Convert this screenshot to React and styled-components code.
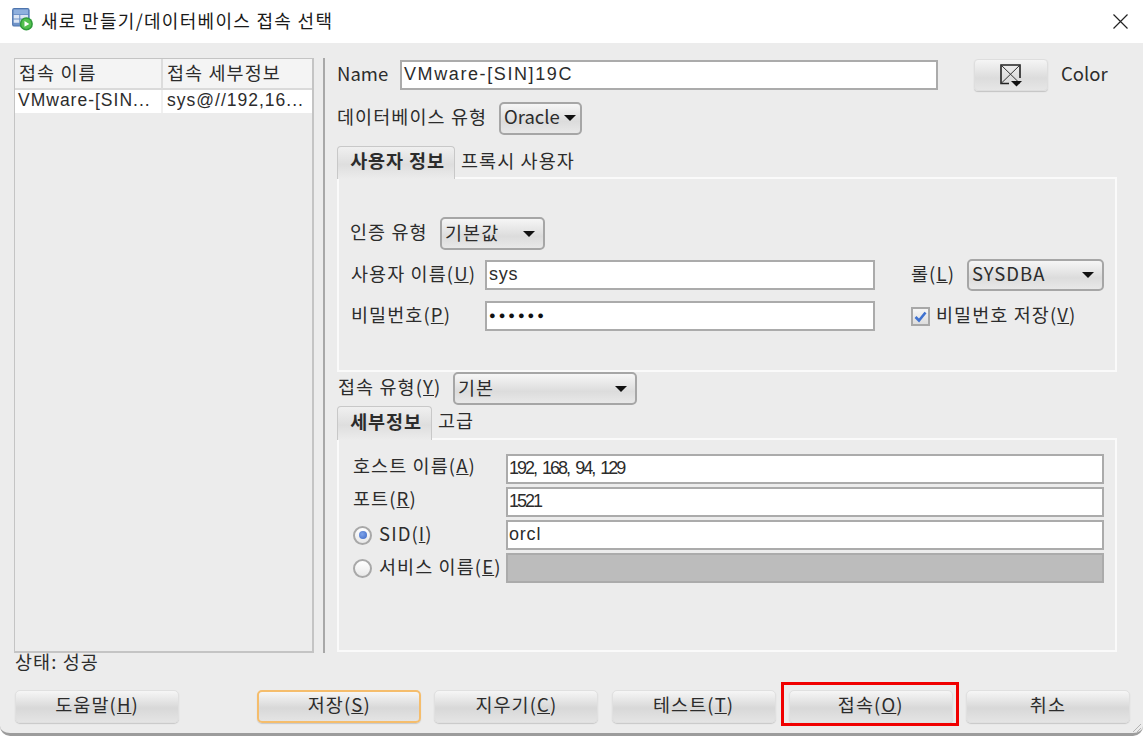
import React from "react"
import styled, { createGlobalStyle, css } from "styled-components"

const KR = `"Noto Sans CJK KR", "Liberation Sans", sans-serif`
const LATIN = `"Liberation Sans", "Noto Sans CJK KR", sans-serif`

const GlobalStyle = createGlobalStyle`
  html, body {
    margin: 0;
    padding: 0;
    background: #ffffff;
    overflow: hidden;
  }
  * {
    box-sizing: border-box;
  }
`

const Window = styled.div`
  display: flex;
  flex-direction: column;
  width: 1143px;
  height: 736px;
  font-family: ${KR};
  font-size: 18.5px;
  letter-spacing: 1.1px;
  color: #2c2c2c;
`

const TitleBar = styled.div`
  display: flex;
  align-items: center;
  height: 43px;
  padding: 0 15px 0 11px;
  background: #ffffff;
  flex-shrink: 0;
`

const TitleIcon = styled.div`
  display: flex;
  padding-bottom: 5px;
`

const TitleText = styled.div`
  margin-left: 7px;
  padding-bottom: 4px;
  font-size: 18px;
  letter-spacing: 1.3px;
  color: #1a1a1a;
`

const CloseButton = styled.div`
  display: flex;
  margin-left: auto;
`

const Body = styled.div`
  position: relative;
  flex: 1;
  display: flex;
  flex-direction: column;
  padding: 15px 14px 0;
  background: #ececec;
  border-bottom: 3px solid #9c9c9c;
  border-radius: 0 0 10px 10px;
`

const Main = styled.div`
  display: flex;
  height: 595px;
`

const ListPanel = styled.div`
  display: flex;
  flex-direction: column;
  width: 300px;
  border: 1px solid #c4c4c4;
  border-width: 1px 2px 2px 1px;
`

const ListHeader = styled.div`
  display: grid;
  grid-template-columns: 148px 1fr;
  height: 31px;
  background: #f4f4f4;
  border-bottom: 2px solid #dadada;
`

const HeaderCell = styled.div`
  display: flex;
  align-items: center;
  padding: 0 0 4px 4px;
  white-space: nowrap;
  border-right: ${(p) => (p.$last ? "none" : "2px solid #dcdcdc")};
`

const ListRow = styled.div`
  display: grid;
  grid-template-columns: 148px 1fr;
  height: 23px;
  background: #ffffff;
`

const RowCell = styled.div`
  display: flex;
  align-items: center;
  padding: 0 0 2px ${(p) => (p.$first ? "3px" : "4px")};
  font-family: ${LATIN};
  font-size: 17.5px;
  letter-spacing: 1px;
  white-space: nowrap;
  overflow: hidden;
  border-right: ${(p) => (p.$first ? "2px solid #f0f0f0" : "none")};
`

const Divider = styled.div`
  width: 2px;
  margin-left: 9px;
  background: #a8a8a8;
`

const RightPane = styled.div`
  display: flex;
  flex-direction: column;
  width: 780px;
  margin-left: 12px;
`

const Row = styled.div`
  display: flex;
  align-items: center;
  height: ${(p) => p.$h || 32}px;
  margin-top: ${(p) => p.$mt || 0}px;
`

const Label = styled.div`
  width: ${(p) => (p.$w ? `${p.$w}px` : "auto")};
  margin-left: ${(p) => p.$ml || 0}px;
  padding-bottom: 5px;
  letter-spacing: ${(p) => (p.$ls !== undefined ? p.$ls : 1.1)}px;
  white-space: nowrap;
  flex-shrink: 0;
`

const Field = styled.div`
  display: flex;
  align-items: center;
  width: ${(p) => (p.$w ? `${p.$w}px` : "auto")};
  height: ${(p) => p.$h || 30}px;
  padding: 0 0 2px ${(p) => (p.$tight ? 1 : 2)}px;
  background: ${(p) => (p.$disabled ? "#bcbcbc" : "#ffffff")};
  border: 2px solid #ababab;
  font-family: ${LATIN};
  font-size: 18px;
  letter-spacing: ${(p) => (p.$ls !== undefined ? p.$ls : 0.8)}px;
  white-space: nowrap;
`

const Comma = styled.span`
  margin-right: 6px;
`

const Dots = styled.span`
  font-size: 11px;
  letter-spacing: 3px;
  color: #111111;
`

const Dropdown = styled.div`
  display: flex;
  align-items: center;
  justify-content: space-between;
  width: ${(p) => p.$w}px;
  height: ${(p) => p.$h || 33}px;
  margin-left: ${(p) => p.$ml || 0}px;
  padding: 0 8px 0 3px;
  background: linear-gradient(#f6f6f6, #dcdcdc 60%, #e8e8e8);
  border: 2px solid #a6a6a6;
  border-radius: 5px;
  letter-spacing: ${(p) => (p.$ls !== undefined ? p.$ls : 1.1)}px;
  white-space: nowrap;
  flex-shrink: 0;
`

const DropdownText = styled.span`
  padding-bottom: 4px;
`

const Caret = styled.span`
  width: 0;
  height: 0;
  margin-left: 4px;
  border-left: 6px solid transparent;
  border-right: 6px solid transparent;
  border-top: 6px solid #111111;
`

const ColorButton = styled.div`
  display: flex;
  align-items: center;
  justify-content: center;
  width: 74px;
  height: 32px;
  margin-left: 36px;
  background: linear-gradient(#f5f5f5, #dcdcdc 60%, #e6e6e6);
  border: 1px solid #dedede;
  border-radius: 4px;
  box-shadow: 0 1px 1px #c4c4c4;
`

const ColorLabel = styled.div`
  margin-left: 13px;
  padding-bottom: 5px;
  letter-spacing: 0;
`

const TabStrip = styled.div`
  display: flex;
  align-items: flex-end;
  height: ${(p) => p.$h}px;
  margin-top: ${(p) => p.$mt || 0}px;
`

const Tab = styled.div`
  display: flex;
  align-items: center;
  justify-content: center;
  width: ${(p) => p.$w}px;
  height: 100%;
  white-space: nowrap;
  ${(p) =>
    p.$active
      ? css`
          position: relative;
          z-index: 1;
          margin-bottom: -2px;
          height: calc(100% + 2px);
          padding: 0 0 6px 3px;
          font-weight: 700;
          letter-spacing: 0.9px;
          background: linear-gradient(#f0f0f0, #dedede 55%, #ececec);
          border: 1px solid #c8c8c8;
          border-bottom: none;
          border-radius: 4px 4px 0 0;
        `
      : css`
          margin-left: 6px;
          justify-content: flex-start;
          padding-bottom: 4px;
        `}
`

const Panel = styled.div`
  display: flex;
  flex-direction: column;
  height: ${(p) => p.$h}px;
  padding-top: ${(p) => p.$pt}px;
  background: #ececec;
  border: 2px solid #fafafa;
`

const FieldGrid = styled.div`
  display: grid;
  grid-template-columns: 167px 598px;
  grid-auto-rows: 30px;
  row-gap: 3px;
`

const FieldLabel = styled.div`
  display: flex;
  align-items: center;
  padding-left: 14px;
  padding-bottom: ${(p) => p.$pb || 4}px;
  white-space: nowrap;
`

const Radio = styled.span`
  display: flex;
  align-items: center;
  justify-content: center;
  width: 19px;
  height: 19px;
  margin: 4px 7px 0 0;
  background: linear-gradient(#ffffff, #e8e8e8);
  border: 2px solid #a8a8a8;
  border-radius: 50%;
  flex-shrink: 0;
  &::after {
    content: "";
    display: ${(p) => (p.$on ? "block" : "none")};
    width: 8px;
    height: 8px;
    border-radius: 50%;
    background: radial-gradient(circle at 40% 40%, #7fa4ea, #3a66c4);
  }
`

const Check = styled.span`
  display: flex;
  align-items: center;
  justify-content: center;
  width: 19px;
  height: 19px;
  margin: 0 6px 0 36px;
  background: linear-gradient(#f6f6f6, #dddddd);
  border: 2px solid #a8a8a8;
  flex-shrink: 0;
`

const Status = styled.div`
  height: 37px;
  padding: 0 0 0 1px;
  line-height: 17px;
  white-space: nowrap;
`

const ButtonBar = styled.div`
  display: flex;
  padding-left: 1px;
  gap: 13.2px;
`

const Button = styled.div`
  position: relative;
  display: flex;
  align-items: center;
  justify-content: center;
  width: 164px;
  height: 33px;
  flex-shrink: 0;
  margin-left: ${(p) => p.$ml || 0}px;
  padding-bottom: 5px;
  background: linear-gradient(#f6f6f6, #d8d8d8 55%, #e4e4e4);
  border: ${(p) => (p.$focus ? "2px solid #f5bd6c" : "1px solid #e0e0e0")};
  border-radius: 5px;
  box-shadow: 0 1px 1px #c8c8c8;
  white-space: nowrap;
`

const RedOutline = styled.div`
  position: absolute;
  top: -9px;
  left: -9px;
  right: -7px;
  bottom: -4px;
  border: 3px solid #f00000;
  pointer-events: none;
`

const Grip = styled.svg`
  position: absolute;
  right: 1px;
  bottom: 0;
`

const AppIcon = () => (
  <svg width="23" height="23" viewBox="0 0 21 21">
    <rect x="1.5" y="0.5" width="15" height="16" rx="1.5" fill="#6f93c8" stroke="#4d74ad" />
    <rect x="2.5" y="1.5" width="13" height="4" fill="#8fb0de" />
    <path d="M2.5 6.5h5v3h-5zM8.5 6.5h7v3h-7zM2.5 10.5h5v3h-5zM8.5 10.5h7v3h-7z" fill="#dce6f4" />
    <circle cx="14" cy="14.5" r="6" fill="#2e9a3a" />
    <circle cx="14" cy="14.5" r="4.6" fill="#52c04e" />
    <path d="M12.3 11.8v5.4l4.4-2.7z" fill="#ffffff" />
  </svg>
)

const CloseIcon = () => (
  <svg width="15" height="15" viewBox="0 0 15 15">
    <path d="M0.5 0.5l14 14M14.5 0.5l-14 14" stroke="#222222" strokeWidth="1.2" fill="none" />
  </svg>
)

const NoColorIcon = () => (
  <svg width="24" height="24" viewBox="0 0 24 24">
    <path d="M10 20.5H2V2h19v13" stroke="#222222" strokeWidth="1.6" fill="none" />
    <path d="M2 2l19 18.5M21 2L2 20.5" stroke="#333333" strokeWidth="1" fill="none" />
    <path d="M12 18h11l-5.5 5.5z" fill="#111111" />
  </svg>
)

const CheckMark = () => (
  <svg width="13" height="13" viewBox="0 0 13 13">
    <path d="M1.5 7l3.5 3.5L11.5 2.5" stroke="#3f72d0" strokeWidth="2.6" fill="none" />
  </svg>
)

const App = () => {
  return (
    <Window>
      <GlobalStyle />
      <TitleBar>
        <TitleIcon>
          <AppIcon />
        </TitleIcon>
        <TitleText>새로 만들기/데이터베이스 접속 선택</TitleText>
        <CloseButton>
          <CloseIcon />
        </CloseButton>
      </TitleBar>
      <Body>
        <Main>
          <ListPanel>
            <ListHeader>
              <HeaderCell>접속 이름</HeaderCell>
              <HeaderCell $last>접속 세부정보</HeaderCell>
            </ListHeader>
            <ListRow>
              <RowCell $first>VMware-[SIN...</RowCell>
              <RowCell>sys@//192,16...</RowCell>
            </ListRow>
          </ListPanel>
          <Divider />
          <RightPane>
            <Row $mt={1}>
              <Label $w={63} $ls={0}>Name</Label>
              <Field $w={538} $h={30} $ls={1.6}>VMware-[SIN]19C</Field>
              <ColorButton>
                <NoColorIcon />
              </ColorButton>
              <ColorLabel>Color</ColorLabel>
            </Row>
            <Row $mt={11}>
              <Label $w={162}>데이터베이스 유형</Label>
              <Dropdown $w={83} $ls={0}>
                <DropdownText>Oracle</DropdownText>
                <Caret />
              </Dropdown>
            </Row>
            <TabStrip $h={31} $mt={12}>
              <Tab $active $w={118}>사용자 정보</Tab>
              <Tab $w={130}>프록시 사용자</Tab>
            </TabStrip>
            <Panel $h={195} $pt={38}>
              <Row $h={33}>
                <Label $ml={11} $w={90}>인증 유형</Label>
                <Dropdown $w={105}>
                  <DropdownText>기본값</DropdownText>
                  <Caret />
                </Dropdown>
              </Row>
              <Row $mt={9} $h={32}>
                <Label $ml={12} $w={134}>
                  사용자 이름(<u>U</u>)
                </Label>
                <Field $w={390}>sys</Field>
                <Label $ml={36} $w={56}>
                  롤(<u>L</u>)
                </Label>
                <Dropdown $w={137} $h={32} $ls={1}>
                  <DropdownText>SYSDBA</DropdownText>
                  <Caret />
                </Dropdown>
              </Row>
              <Row $mt={10} $h={30}>
                <Label $ml={12} $w={134}>
                  비밀번호(<u>P</u>)
                </Label>
                <Field $w={390}>
                  <Dots>●●●●●●</Dots>
                </Field>
                <Check>
                  <CheckMark />
                </Check>
                <Label>
                  비밀번호 저장(<u>V</u>)
                </Label>
              </Row>
            </Panel>
            <Row $h={33}>
              <Label $ml={1} $w={115}>
                접속 유형(<u>Y</u>)
              </Label>
              <Dropdown $w={184}>
                <DropdownText>기본</DropdownText>
                <Caret />
              </Dropdown>
            </Row>
            <TabStrip $h={32} $mt={1}>
              <Tab $active $w={95}>세부정보</Tab>
              <Tab $w={50}>고급</Tab>
            </TabStrip>
            <Panel $h={214} $pt={14}>
              <FieldGrid>
                <FieldLabel $pb={8}>
                  호스트 이름(<u>A</u>)
                </FieldLabel>
                <Field $ls={-2} $tight>
                  192<Comma>,</Comma>168<Comma>,</Comma>94<Comma>,</Comma>129
                </Field>
                <FieldLabel $pb={8}>
                  포트(<u>R</u>)
                </FieldLabel>
                <Field $ls={-2} $tight>1521</Field>
                <FieldLabel>
                  <Radio $on />
                  SID(<u>I</u>)
                </FieldLabel>
                <Field $tight>orcl</Field>
                <FieldLabel>
                  <Radio />
                  서비스 이름(<u>E</u>)
                </FieldLabel>
                <Field $disabled />
              </FieldGrid>
            </Panel>
          </RightPane>
        </Main>
        <Status>상태: 성공</Status>
        <ButtonBar>
          <Button>
            <span>
              도움말(<u>H</u>)
            </span>
          </Button>
          <Button $focus $ml={65}>
            <span>
              저장(<u>S</u>)
            </span>
          </Button>
          <Button>
            <span>
              지우기(<u>C</u>)
            </span>
          </Button>
          <Button>
            <span>
              테스트(<u>T</u>)
            </span>
          </Button>
          <Button>
            <span>
              접속(<u>O</u>)
            </span>
            <RedOutline />
          </Button>
          <Button>
            <span>취소</span>
          </Button>
        </ButtonBar>
        <Grip width="12" height="12" viewBox="0 0 12 12">
          <path d="M11 3l-8 8M11 7l-4 4" stroke="#b4b4b4" strokeWidth="1" fill="none" />
        </Grip>
      </Body>
    </Window>
  )
}

export default App
